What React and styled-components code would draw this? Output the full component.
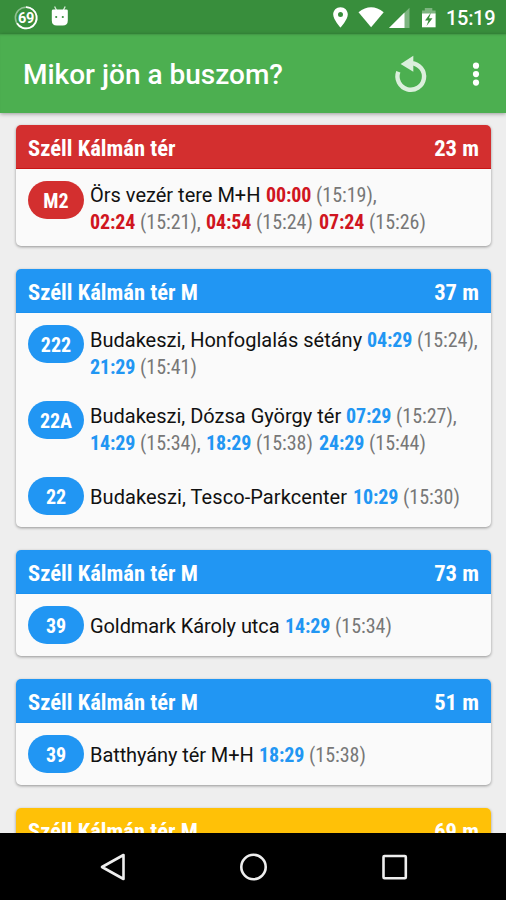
import React from "react";
import styled, { createGlobalStyle } from "styled-components";

const GlobalStyle = createGlobalStyle`
  * { box-sizing: border-box; }
  body { margin: 0; background: #eee; font-family: "Roboto", "Liberation Sans", sans-serif; }
`;

const Screen = styled.div`
  width: 506px;
  height: 900px;
  display: flex;
  flex-direction: column;
  overflow: hidden;
  background: #eee;
`;

const StatusBar = styled.header`
  height: 34px;
  flex: none;
  display: flex;
  align-items: center;
  justify-content: space-between;
  padding: 0 11px 0 13px;
  background: #388e3c;
  color: #fff;
`;

const StatusGroup = styled.div`
  display: flex;
  align-items: center;
  height: 34px;
`;

const Clock = styled.span`
  font-size: 20px;
  font-weight: 500;
  line-height: 34px;
  width: 49px;
  margin-left: 9px;
  padding-top: 2px;
  letter-spacing: -0.3px;
  white-space: nowrap;
`;

const AppBar = styled.div`
  height: 79px;
  flex: none;
  display: flex;
  align-items: center;
  padding: 0 0 0 23px;
  background: #4caf50;
  color: #fff;
  box-shadow: 0 1px 4px rgba(0, 0, 0, 0.35), inset 0 2px 2px -1px rgba(0, 0, 0, 0.15);
  z-index: 1;
`;

const Title = styled.h1`
  margin: 0;
  flex: 1;
  font-size: 28px;
  font-weight: 500;
  line-height: 32px;
  padding-top: 3px;
`;

const IconButton = styled.button`
  border: 0;
  padding: 0;
  background: none;
  display: flex;
  margin-right: ${(p) => p.$gap}px;
`;

const List = styled.main`
  flex: 1;
  min-height: 0;
  overflow: hidden;
  padding: 12px 15px 0 16px;
  display: flex;
  flex-direction: column;
  gap: 23px;
`;

const Card = styled.section`
  flex: none;
  border-radius: 5px;
  background: #fafafa;
  box-shadow: 0 1px 3px rgba(0, 0, 0, 0.38);
`;

const CardHeader = styled.div`
  height: 44px;
  padding: 4px 12px 0;
  display: flex;
  align-items: center;
  justify-content: space-between;
  border-radius: 5px 5px 0 0;
  background: ${(p) => p.$tone};
  border-bottom: 1px solid ${(p) => p.$edge};
  color: #fff;
`;

const Condensed = styled.span`
  font-family: "Roboto Condensed", "Roboto", "Liberation Sans", sans-serif;
  font-stretch: 75%;
  white-space: nowrap;
`;

const HeaderText = styled(Condensed)`
  font-size: 22.6px;
  font-weight: 700;
  line-height: 26px;
`;

const Lines = styled.div`
  margin-left: 6px;
  padding-top: ${(p) => (p.$lines > 1 ? 2 : 7)}px;
`;

const Row = styled.div`
  display: flex;
  padding: 12px 0 0 12px;
  height: ${(p) => (p.$lines > 1 ? 76 : 62)}px;

  &:last-child {
    height: ${(p) => (p.$lines > 1 ? 77 : 62)}px;
  }

  &:last-child ${Lines} {
    padding-top: ${(p) => (p.$lines > 1 ? 1 : 7)}px;
  }
`;

const Pill = styled.div`
  width: 56px;
  height: 38px;
  flex: none;
  border-radius: 19px;
  display: flex;
  align-items: center;
  justify-content: center;
  padding-top: 2px;
  background: ${(p) => p.$tone};
  color: #fff;
  font-size: 20px;
  font-weight: 700;
`;

const Line = styled.div`
  display: flex;
  height: 27px;
  line-height: 27px;
  white-space: pre;
  font-size: 20px;
  color: #111;
`;

const Countdown = styled(Condensed)`
  width: 50px;
  font-weight: 700;
  letter-spacing: -0.15px;
  color: ${(p) => p.$tone};
`;

const At = styled(Condensed)`
  color: #777;
  width: ${(p) => (p.$comma ? 66 : 63)}px;
`;

const Destination = styled.span`
  width: ${(p) => p.$width}px;
  letter-spacing: ${(p) => p.$tracking || 0}px;
`;

const NavBar = styled.nav`
  height: 67px;
  flex: none;
  display: flex;
  align-items: center;
  justify-content: center;
  gap: 112.5px;
  background: #000;
  z-index: 1;
`;

const RED = { main: "#d32f2f", edge: "#c91414", text: "#d01520" };
const BLUE = { main: "#2196f3", edge: "#1b91f0", text: "#2196f3" };
const AMBER = { main: "#ffc107", edge: "#ffc107", text: "#ffc107" };

const stops = [
  { name: "Széll Kálmán tér", distance: "23 m", tone: RED, routes: [
    { line: "M2", to: "Örs vezér tere M+H", width: 176, times: [
      [["00:00", "(15:19),"]],
      [["02:24", "(15:21),"], ["04:54", "(15:24)"], ["07:24", "(15:26)"]]] },
  ] },
  { name: "Széll Kálmán tér M", distance: "37 m", tone: BLUE, routes: [
    { line: "222", to: "Budakeszi, Honfoglalás sétány", width: 277, times: [
      [["04:29", "(15:24),"]], [["21:29", "(15:41)"]]] },
    { line: "22A", to: "Budakeszi, Dózsa György tér", width: 256, times: [
      [["07:29", "(15:27),"]],
      [["14:29", "(15:34),"], ["18:29", "(15:38)"], ["24:29", "(15:44)"]]] },
    { line: "22", to: "Budakeszi, Tesco-Parkcenter", width: 263, tracking: 0.07, times: [[["10:29", "(15:30)"]]] },
  ] },
  { name: "Széll Kálmán tér M", distance: "73 m", tone: BLUE, routes: [
    { line: "39", to: "Goldmark Károly utca", width: 195, tracking: -0.08, times: [[["14:29", "(15:34)"]]] },
  ] },
  { name: "Széll Kálmán tér M", distance: "51 m", tone: BLUE, routes: [
    { line: "39", to: "Batthyány tér M+H", width: 169, tracking: -0.08, times: [[["18:29", "(15:38)"]]] },
  ] },
  { name: "Széll Kálmán tér M", distance: "69 m", tone: AMBER, routes: [] },
];

function Route({ route, tone }) {
  const lines = route.times.length;
  return (
    <Row $lines={lines}>
      <Pill $tone={tone.main}><Condensed>{route.line}</Condensed></Pill>
      <Lines $lines={lines}>
        {route.times.map((times, i) => (
          <Line key={i}>
            {i === 0 && <Destination $width={route.width} $tracking={route.tracking}>{route.to}</Destination>}
            {times.map(([left, at]) => (
              <React.Fragment key={left}>
                <Countdown $tone={tone.text}>{left}</Countdown>
                <At $comma={at.endsWith(",")}>{at}</At>
              </React.Fragment>
            ))}
          </Line>
        ))}
      </Lines>
    </Row>
  );
}

const NotificationIcons = () => (
  <svg width="60" height="34" viewBox="13 0 60 34">
    <circle cx="26" cy="17.8" r="10.6" fill="none" stroke="#fff" strokeOpacity=".45" strokeWidth="1.6" />
    <path d="M26 7.2a10.6 10.6 0 1 1-9 16" fill="none" stroke="#fff" strokeWidth="1.8" />
    <text x="26" y="22.6" textAnchor="middle" fontFamily="Roboto, sans-serif" fontSize="14.5" fontWeight="700" letterSpacing="-.4" fill="#fff">69</text>
    <path d="M54.6 6.5l2 4M65.2 6.5l-2 4" stroke="#d8ecd9" strokeWidth="1.3" />
    <path d="M53.5 9.5h13q1.3 0 1.3 1.3v9.7q0 5-5 5h-6q-5 0-5-5v-9.7q0-1.3 1.7-1.3z" fill="#fff" />
    <circle cx="56.2" cy="17" r="1.1" fill="#388e3c" /><circle cx="62.8" cy="17" r="1.1" fill="#388e3c" />
  </svg>
);

const SystemIcons = () => (
  <svg width="106" height="34" viewBox="331 0 106 34">
    <path fillRule="evenodd" fill="#fff" d="M340.5 7.3c-4.2 0-7.3 3.2-7.3 7.2 0 5 7.3 13 7.3 13s7.3-8 7.3-13c0-4-3.1-7.2-7.3-7.2zm0 4.7a2.5 2.5 0 1 1 0 5 2.5 2.5 0 0 1 0-5z" />
    <path d="M358.5 12.2q12.6-9.7 25.2 0L371.1 27.3z" fill="#fff" />
    <path d="M389 28L409.5 7.7V28z" fill="#fff" fillOpacity=".35" />
    <path d="M389 28L404.5 12.6V28z" fill="#fff" />
    <path d="M422 10.5h2.8V8h7.5v2.5h3.3v4H422z" fill="#fff" fillOpacity=".35" />
    <path d="M422 13.5h13.6v13.8H422z" fill="#fff" />
    <path d="M431 12.5l-6 8h3.5l-2 5.5 6-7.7H429z" fill="#388e3c" />
  </svg>
);

export default function App() {
  return (
    <>
      <GlobalStyle />
      <Screen>
        <StatusBar>
          <StatusGroup><NotificationIcons /></StatusGroup>
          <StatusGroup><SystemIcons /><Clock>15:19</Clock></StatusGroup>
        </StatusBar>
        <AppBar>
          <Title>Mikor jön a buszom?</Title>
          <IconButton aria-label="Frissítés" $gap={43}>
            <svg width="36" height="40" viewBox="393 53.5 36 40">
              <path d="M398.3 71.3a13.3 13.3 0 1 0 13.2-8.6" fill="none" stroke="#dbefdc" strokeWidth="4.4" />
              <path d="M400.6 63.4L413.3 55.2V71.3z" fill="#dbefdc" />
            </svg>
          </IconButton>
          <IconButton aria-label="Menü" $gap={26}>
            <svg width="8" height="26" viewBox="0 0 8 26">
              <circle cx="4" cy="4.7" r="3.1" fill="#fff" />
              <circle cx="4" cy="13.1" r="3.1" fill="#fff" />
              <circle cx="4" cy="21.6" r="3.1" fill="#fff" />
            </svg>
          </IconButton>
        </AppBar>
        <List>
          {stops.map((stop, i) => (
            <Card key={i}>
              <CardHeader $tone={stop.tone.main} $edge={stop.tone.edge}>
                <HeaderText>{stop.name}</HeaderText>
                <HeaderText>{stop.distance}</HeaderText>
              </CardHeader>
              {stop.routes.map((route) => (
                <Route key={route.line} route={route} tone={stop.tone} />
              ))}
            </Card>
          ))}
        </List>
        <NavBar>
          <svg width="28" height="30" viewBox="0 0 28 30">
            <path d="M3 15L24.5 3V27z" fill="none" stroke="#eee" strokeWidth="2.6" strokeLinejoin="round" />
          </svg>
          <svg width="28" height="30" viewBox="0 0 28 30">
            <circle cx="14.5" cy="15" r="12.2" fill="none" stroke="#eee" strokeWidth="2.6" />
          </svg>
          <svg width="28" height="30" viewBox="0 0 28 30">
            <rect x="3.5" y="4" width="22.3" height="22.3" rx="1" fill="none" stroke="#eee" strokeWidth="2.6" />
          </svg>
        </NavBar>
      </Screen>
    </>
  );
}
